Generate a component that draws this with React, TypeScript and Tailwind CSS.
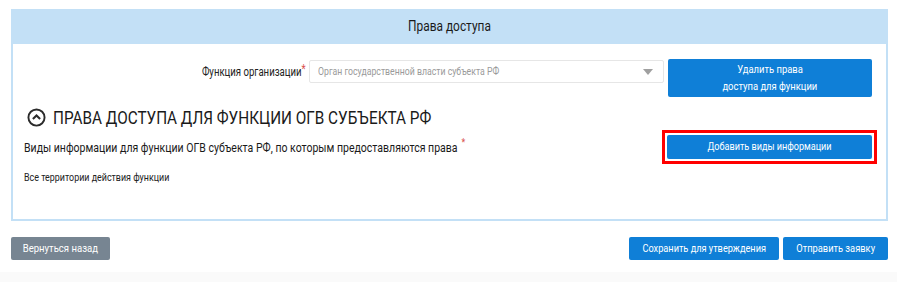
const font = { fontFamily: "Roboto, 'Noto Sans', sans-serif" };

// Roboto is wider than the condensed face in the picture, so narrow it a little
function Cond({ children, className = "" }: { children: React.ReactNode; className?: string }) {
  return <span className={"inline-block whitespace-nowrap " + className}>{children}</span>;
}

function ChevronCircle() {
  return (
    <svg width="19" height="19" viewBox="0 0 20 20" className="shrink-0">
      <circle cx="10" cy="10" r="8.5" fill="none" stroke="#2b2b2b" strokeWidth="2" />
      <path d="M6.2 11.6 L10 7.8 L13.8 11.6" fill="none" stroke="#2b2b2b" strokeWidth="2.2" />
    </svg>
  );
}

export default function App() {
  return (
    <div className="flex h-[282px] w-[897px] flex-col bg-white text-[#222]" style={font}>
      <div className="pl-[11px] pr-[9px] pt-[9px]">
        <div className="flex h-[212px] flex-col border-x-2 border-b-2 border-[#c3e0f6] bg-white">
          <div className="-mx-[2px] flex h-[35px] items-center justify-center bg-[#c3e0f6] text-[14.5px] text-[#1a1a1a]">
            <Cond className="origin-center scale-x-[0.82]">Права доступа</Cond>
          </div>

          <div className="flex items-start pl-[12px] pr-[14px] pt-[15px]">
            <div className="flex flex-1 items-center justify-end pt-[1px]">
              <Cond className="mr-[3px] origin-right scale-x-[0.8] text-[12px] text-[#222]">
                Функция организации<span className="relative -top-[3px] text-[#d9534f]">*</span>
              </Cond>
              <div className="flex h-[23px] w-[355px] items-center justify-between overflow-hidden rounded-[2px] border border-[#e6e6e6] bg-white pl-[8px] pr-[10px] text-[10.5px] text-[#9a9a9a]">
                <Cond className="origin-left scale-x-[0.83]">Орган государственной власти субъекта РФ</Cond>
                <span className="h-0 w-0 border-x-[5px] border-t-[6px] border-x-transparent border-t-[#a0a0a0]" />
              </div>
            </div>
            <button className="ml-[4px] flex h-[38px] w-[204px] flex-col items-center justify-center rounded-[2px] bg-[#0f7fd7] text-[11.5px] leading-[17px] text-white">
              <Cond className="origin-center scale-x-[0.82]">Удалить права</Cond>
              <Cond className="origin-center scale-x-[0.82]">доступа для функции</Cond>
            </button>
          </div>

          <div className="mt-[8px] flex h-[25px] items-center gap-[7px] pl-[14px]">
            <ChevronCircle />
            <h2 className="text-[19px] leading-[24px] text-[#1a1a1a]">
              <Cond className="origin-left scale-x-[0.805]">ПРАВА ДОСТУПА ДЛЯ ФУНКЦИИ ОГВ СУБЪЕКТА РФ</Cond>
            </h2>
          </div>

          <div className="flex items-center justify-between pl-[11px] pr-[9px]">
            <div className="text-[13.5px] text-[#1a1a1a]">
              <Cond className="origin-left scale-x-[0.78]">
                Виды информации для функции ОГВ субъекта РФ, по которым предоставляются права
                <span className="relative -top-[6px] ml-[5px] text-[11px] text-[#d9534f]">*</span>
              </Cond>
            </div>
            <div className="w-[215px] border-[3px] border-[#ff0000] p-[2px]">
              <button className="flex h-[24px] w-full items-center justify-center rounded-[2px] bg-[#0f7fd7] text-[11.5px] text-white">
                <Cond className="origin-center scale-x-[0.79]">Добавить виды информации</Cond>
              </button>
            </div>
          </div>

          <div className="mt-[7px] pl-[11px] text-[11px] leading-[13px] text-[#222]">
            <Cond className="origin-left scale-x-[0.81]">Все территории действия функции</Cond>
          </div>
        </div>
      </div>

      <div className="flex items-center justify-between pl-[11px] pr-[9px] pt-[16px]">
        <button className="flex h-[23px] w-[99px] items-center justify-center rounded-[2px] bg-[#778592] text-[11.5px] text-white">
          <Cond className="origin-center scale-x-[0.83]">Вернуться назад</Cond>
        </button>
        <div className="flex gap-[4px]">
          <button className="flex h-[23px] w-[150px] items-center justify-center rounded-[2px] bg-[#0f7fd7] text-[11.5px] text-white">
            <Cond className="origin-center scale-x-[0.8]">Сохранить для утверждения</Cond>
          </button>
          <button className="flex h-[23px] w-[105px] items-center justify-center rounded-[2px] bg-[#0f7fd7] text-[11.5px] text-white">
            <Cond className="origin-center scale-x-[0.81]">Отправить заявку</Cond>
          </button>
        </div>
      </div>

      <div className="mt-auto h-[10px] bg-[#fafafa]" />
    </div>
  );
}
